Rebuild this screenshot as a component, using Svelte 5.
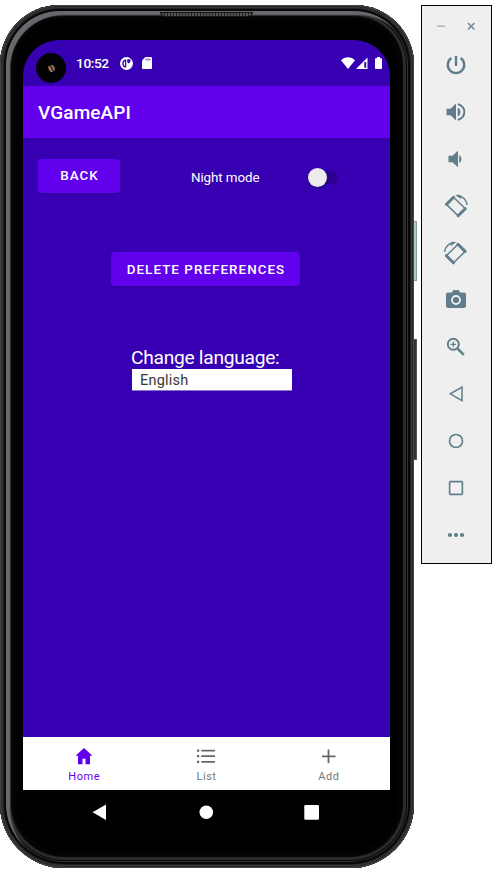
<script>
  const tools = ['power', 'louder', 'quieter', 'left', 'right', 'camera', 'zoom', 'back', 'home', 'overview', 'more'];
  const tabs = ['Home', 'List', 'Add'];
</script>

<main>
  <section class="phone">
    <i class="key power-key"></i>
    <i class="key volume-key"></i>
    <div class="shell"></div>
    <div class="speaker"></div>
    <div class="screen">
      <header class="status">
        <div class="lens"><i></i></div>
        <time>10:52</time>
        <svg class="pie" width="13" height="13" viewBox="0 0 13 13">
          <circle cx="6.5" cy="6.5" r="6.5" fill="#fff" />
          <path d="M5.600 2.800v7.400M5.600 2.800a3.900 3.900 0 0 0 0 7.400" fill="none" stroke="#3700b3" stroke-width="1.300" />
          <path d="M7.200 2.300h3.200v2.500L8.900 6.500 7.200 5.200z" fill="#3700b3" />
        </svg>
        <svg class="sd" width="10" height="12" viewBox="0 0 10 12">
          <path d="M3.4 0H9a1 1 0 0 1 1 1v10a1 1 0 0 1-1 1H1a1 1 0 0 1-1-1V3.4z" fill="#fff" />
          <path d="M4.200 1.500v2M6 1.500v2M7.900 1.500v2" stroke="#3700b3" stroke-width=".8" />
        </svg>
        <span class="grow"></span>
        <svg width="42" height="13" viewBox="0 0 42 13" fill="#fff">
          <path d="M0 3.2C4-.7 10-.7 14 3.2L7 12z" />
          <path d="M26.5.4V12H15z" />
          <path d="M23.300 5h1.900v5.700h-1.900z" fill="#3700b3" />
          <path d="M36 0h3v1.2h1.2q.8 0 .8.8v9.2q0 .8-.8.8h-5.4q-.8 0-.8-.8V2q0-.8.8-.8H36z" />
        </svg>
      </header>
      <h1>VGameAPI</h1>
      <div class="content">
        <div class="row">
          <button class="back">BACK</button>
          <span class="mode">Night mode</span>
          <span class="switch"><i></i></span>
        </div>
        <button class="delete">DELETE PREFERENCES</button>
        <div class="lang">
          <label for="language">Change language:</label>
          <div id="language" class="select">English</div>
        </div>
      </div>
      <nav>
        {#each tabs as tab, i}
          <div class="tab" class:active={i === 0}>
            <svg width="22" height="20" viewBox="0 0 22 20" fill="currentColor">
              {#if i === 0}
                <path d="M11 2 2.5 9.8H5v8.4h4.5v-5.5h3v5.5H17V9.8h2.5z" />
              {:else if i === 1}
                <path d="M2 3.5h2.2v2.2H2zM6.3 3.7H20v1.8H6.3zM2 9.1h2.2v2.2H2zM6.3 9.3H20v1.8H6.3zM2 14.8h2.2V17H2zM6.3 15H20v1.8H6.3z" />
              {:else}
                <path d="M9.600 3.600h1.800v5.800h6.100v1.800h-6.100V17H9.600v-5.800H4V9.400h5.600z" />
              {/if}
            </svg>
            <span>{tab}</span>
          </div>
        {/each}
      </nav>
      <footer>
        <svg width="367" height="46" viewBox="0 0 367 46" fill="#fff">
          <path d="M83 14.5v15.6L69.5 22.3z" />
          <circle cx="183.3" cy="22.3" r="6.8" />
          <rect x="281.3" y="15" width="14.7" height="14.7" rx="1.3" />
        </svg>
      </footer>
    </div>
  </section>

  <aside>
    <div class="window">
      <svg width="70" height="35" viewBox="0 0 70 35" fill="none">
        <path d="M15 20.200h8" stroke="#9fb0b8" stroke-width="1.4" />
        <path d="m46 17 6.4 6.4m0-6.4L46 23.4" stroke="#6b8693" stroke-width="1.4" />
      </svg>
    </div>
    {#each tools as tool}
      <div class="tool">
        <svg width="26" height="26" viewBox="0 0 26 26" fill="none" stroke="#607d8b" stroke-width="2.4">
          {#if tool === 'power'}
            <path d="M13 4v10M8.400 6.100a8.200 8.200 0 1 0 9.200 0" />
          {:else if tool === 'louder'}
            <path d="M3.5 9.8h4L13 4.5v17l-5.5-5.3h-4z" fill="#607d8b" stroke="none" />
            <path d="M14.7 8.5v9a5 5 0 0 0 0-9z" fill="#607d8b" stroke="none" />
            <path d="M14.7 5.2a7.9 7.9 0 0 1 0 15.6" stroke-width="2" />
          {:else if tool === 'quieter'}
            <path d="M5.5 9.8h4L15 4.8v16.4l-5.5-5h-4z" fill="#607d8b" stroke="none" />
            <path d="M16.2 9v8a4.7 4.7 0 0 0 0-8z" fill="#607d8b" stroke="none" />
          {:else if tool === 'left' || tool === 'right'}
            <g transform={tool === 'right' ? 'matrix(-1 0 0 1 25.6 0)' : undefined}>
              <path d="m10.6 4.3 11.7 11.4-7.2 7.1L3.4 11.4z" stroke-width="1.5" stroke-linejoin="round" />
              <path d="m3.5 11.4 7.1-7.1m11.7 11.4-7.2 7.1" stroke-width="3" stroke-linecap="round" />
              <path d="M14.5 2.7c5.2.2 9 4 9.6 9.2" stroke-width="1.5" />
              <path d="m12.3 2 4.7-.3 1 4.6z" fill="#607d8b" stroke="none" />
            </g>
          {:else if tool === 'camera'}
            <path d="M5 5.5h3.7L10.5 3h5l1.8 2.5H21q2 0 2 2v11.6q0 2-2 2H5q-2 0-2-2V7.500q0-2 2-2z" fill="#607d8b" stroke="none" />
            <circle cx="13" cy="13" r="4" stroke="#efefef" stroke-width="1.8" />
          {:else if tool === 'zoom'}
            <circle cx="10.300" cy="10.300" r="5.500" stroke-width="1.9" />
            <path d="m14.600 14.600 6.200 6.200" stroke-width="2.5" />
            <path d="M10.300 7.500v5.600M7.500 10.300h5.600" stroke-width="1.200" />
          {:else if tool === 'back'}
            <path d="M19 6v13.600L7.300 12.800z" stroke-width="1.500" />
          {:else if tool === 'home'}
            <circle cx="13" cy="13" r="6.500" stroke-width="1.600" />
          {:else if tool === 'overview'}
            <rect x="6.600" y="6.600" width="12.800" height="12.800" rx=".8" stroke-width="1.600" />
          {:else}
            <path d="M7 13h.01M13 13h.01M19 13h.01" stroke-width="4.200" stroke-linecap="round" />
          {/if}
        </svg>
      </div>
    {/each}
  </aside>
</main>

<style>
  :global(body) { background: #fff; }
  main {
    display: flex;
    align-items: flex-start;
    width: 497px;
    height: 873px;
    padding-top: 5px;
    box-sizing: border-box;
    overflow: hidden;
    font-family: Roboto, sans-serif;
    color: #fff;
  }
  .phone {
    position: relative;
    width: 414px;
    height: 863px;
    padding: 35px 24px 0 23px;
    box-sizing: border-box;
    flex: none;
  }
  .shell {
    position: absolute;
    inset: 0;
    border-radius: 60px 60px 64px 64px;
    background: #000;
    box-shadow:
      inset 0 0 0 1px #454745,
      inset 0 0 0 2px #272827,
      inset 0 0 0 3px #363736,
      inset 0 0 0 4px #202121,
      inset 0 0 0 6px #080808,
      inset 4px 4px 1px 6px #68686e,
      inset 0 0 0 7px #303030,
      inset 0 0 0 8px #080808,
      inset 0 0 1px 11px #2c2c2d,
      inset 0 0 8px 13px #08090a;
  }
  .key {
    position: absolute;
    left: 413px;
    width: 4px;
    box-sizing: border-box;
  }
  .power-key { top: 216px; height: 60px; background: #a8cfbc; border: 1px solid #879f92; }
  .volume-key { top: 334px; height: 121px; background: #353332; border: 1px solid #555; }
  .speaker {
    position: absolute;
    left: 160px;
    top: 7px;
    width: 93px;
    height: 5px;
    border-radius: 0 0 5px 5px;
    background: repeating-linear-gradient(90deg, #222 0 1px, #555 1px 3px);
    border: 1px solid #151515;
    box-sizing: border-box;
  }
  .screen {
    position: relative;
    display: flex;
    flex-direction: column;
    width: 367px;
    height: 796px;
    overflow: hidden;
    border-radius: 36px 36px 0 0;
    background: #3700b3;
  }
  .status {
    display: flex;
    align-items: center;
    height: 46px;
    padding: 0 6px 0 13px;
    box-sizing: border-box;
    flex: none;
  }
  .status > svg:last-child { margin-right: 1px; }
  .lens {
    display: grid;
    place-items: center;
    width: 30px;
    height: 30px;
    margin-top: 10px;
    border-radius: 50%;
    background: #020203;
  }
  .lens i {
    width: 7px;
    height: 7px;
    border-radius: 50%;
    background: linear-gradient(60deg, #35231c 20%, #c89878 35%, #2a1917 52%, #a77b60 68%, #201312);
  }
  time { width: 33px; margin-left: 10px; font-size: 13.700px; font-weight: 500; letter-spacing: -.4px; white-space: nowrap; }
  .pie { margin-left: 11px; }
  .sd { margin-left: 9px; }
  .grow { flex: 1; }
  h1 {
    margin: 0;
    height: 52px;
    flex: none;
    padding-left: 15px;
    background: #6200ee;
    font-size: 19px;
    line-height: 54px;
    font-weight: 500;
    letter-spacing: .1px;
  }
  .content {
    display: flex;
    flex-direction: column;
    height: 599px;
    flex: none;
    box-sizing: border-box;
    padding-top: 21px;
    background: linear-gradient(#3400a8, #3700b3 4px);
  }
  .row { display: flex; height: 34px; padding-left: 15px; align-items: center; }
  button {
    height: 34px;
    padding: 0;
    border: 0;
    border-radius: 4px;
    background: #6200ee;
    color: #fff;
    font: 500 13.400px Roboto, sans-serif;
    letter-spacing: 1.050px;
    box-shadow: 0 1px 2px #25008066;
  }
  .back { width: 82px; margin-top: -1px; padding-left: 1px; }
  .mode { width: 117px; margin-left: 71px; padding-top: 3px; font-size: 13.400px; letter-spacing: -.1px; }
  .switch { display: flex; align-items: center; width: 30px; height: 13px; border-radius: 7px; background: #2b008a; margin-top: 2px; }
  .switch i { width: 19px; height: 19px; flex: none; border-radius: 50%; background: #ececec; box-shadow: 0 1px 2px #0005; }
  .delete { width: 189px; margin: 59px 0 0 88px; padding-left: 1px; }
  .lang { display: flex; flex-direction: column; margin: 60px 0 0 108px; }
  label { height: 23px; font-size: 19.200px; line-height: 23px; letter-spacing: -.280px; }
  .select {
    width: 160px;
    height: 22px;
    margin-left: 1px;
    padding-left: 8px;
    box-sizing: border-box;
    background: #fff;
    border-bottom: 1px solid #8a74cb;
    color: #373737;
    font-size: 14.500px;
    line-height: 23px;
    letter-spacing: .2px;
  }
  nav { display: flex; height: 53px; flex: none; background: #fff; }
  .tab { display: flex; flex-direction: column; align-items: center; flex: 1; padding-top: 9px; color: #666; font-size: 11px; letter-spacing: .5px; }
  .tab span { line-height: 13px; margin-top: 4px; color: #777; }
  .tab.active, .tab.active span { color: #6200ee; }
  footer { height: 46px; background: #000; flex: none; }
  aside {
    width: 71px;
    height: 559px;
    margin-left: 7px;
    box-sizing: border-box;
    border: 1px solid #000;
    background: #efefef;
    flex: none;
  }
  .window { height: 35px; }
  .window svg, .tool svg, footer svg { display: block; }
  .tool { display: flex; justify-content: center; align-items: center; height: 47px; padding-right: 2px; }
</style>
